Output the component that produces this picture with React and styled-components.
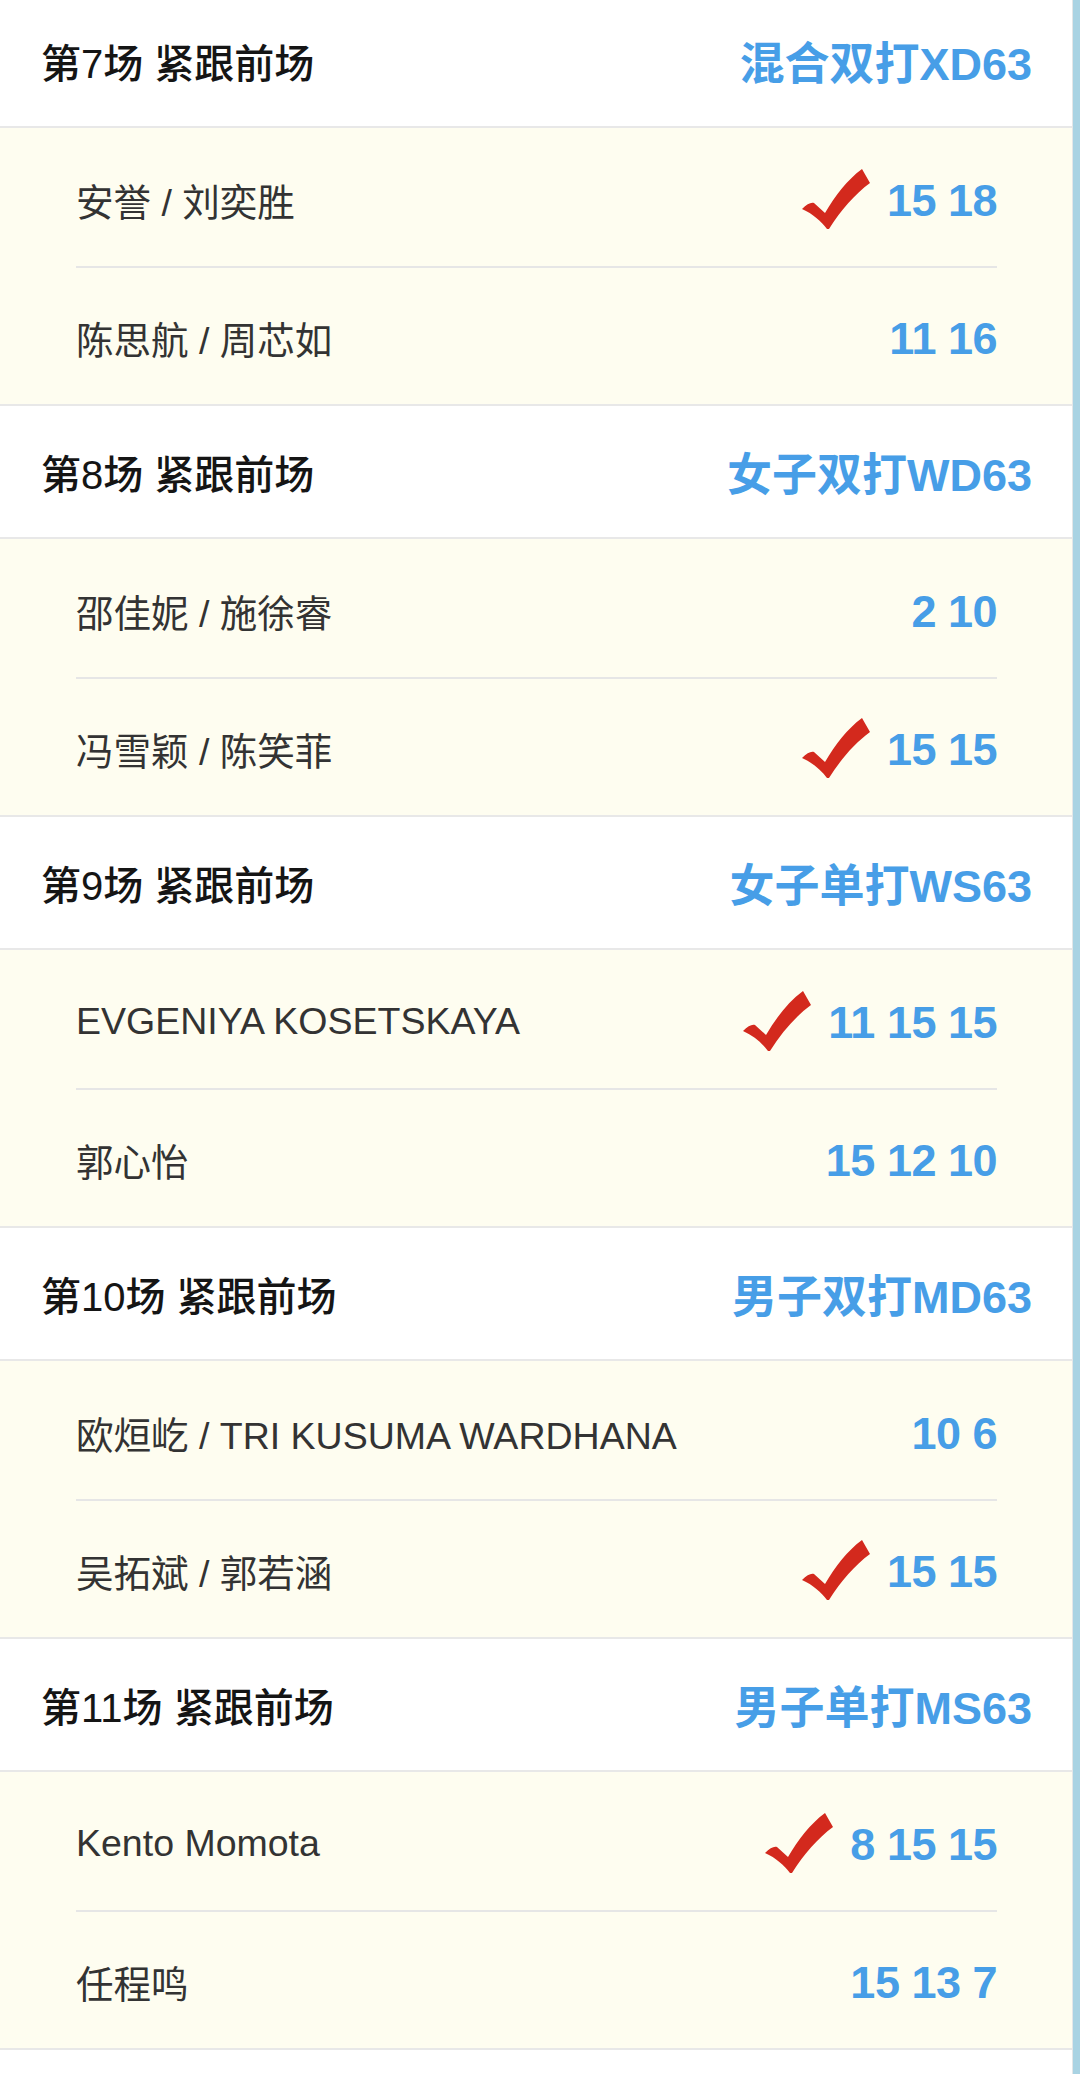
import React from 'react';
import styled, { createGlobalStyle } from 'styled-components';

const matches = [
  {
    no: 7,
    event: '混合双打XD63',
    players: [
      { name: '安誉 / 刘奕胜', scores: [15, 18], win: true },
      { name: '陈思航 / 周芯如', scores: [11, 16] },
    ],
  },
  {
    no: 8,
    event: '女子双打WD63',
    players: [
      { name: '邵佳妮 / 施徐睿', scores: [2, 10] },
      { name: '冯雪颖 / 陈笑菲', scores: [15, 15], win: true },
    ],
  },
  {
    no: 9,
    event: '女子单打WS63',
    players: [
      { name: 'EVGENIYA KOSETSKAYA', scores: [11, 15, 15], win: true },
      { name: '郭心怡', scores: [15, 12, 10] },
    ],
  },
  {
    no: 10,
    event: '男子双打MD63',
    players: [
      { name: '欧烜屹 / TRI KUSUMA WARDHANA', scores: [10, 6] },
      { name: '吴拓斌 / 郭若涵', scores: [15, 15], win: true },
    ],
  },
  {
    no: 11,
    event: '男子单打MS63',
    players: [
      { name: 'Kento Momota', scores: [8, 15, 15], win: true },
      { name: '任程鸣', scores: [15, 13, 7] },
    ],
  },
];

const GlobalStyle = createGlobalStyle`
  html, body {
    margin: 0;
    padding: 0;
    background: #fff;
  }
  body {
    font-family: "Liberation Sans", "Noto Sans CJK SC", sans-serif;
    overflow: hidden;
  }
  * {
    box-sizing: border-box;
  }
`;

function Check() {
  return (
    <CheckMark viewBox="0 0 68 60">
      <path
        d="M0 40 C5 35 9 33 12 34 L23 44 C33 27 45 11 60 0 L68 14 C53 25 39 41 27 60 L25 60 C19 52 11 45 0 40 Z"
        fill="#d3291d"
      />
    </CheckMark>
  );
}

export default function App() {
  return (
    <Page>
      <GlobalStyle />
      <List>
        {matches.map((m) => (
          <Match key={m.no}>
            <MatchHeader>
              <MatchNo>第{m.no}场 紧跟前场</MatchNo>
              <EventName>{m.event}</EventName>
            </MatchHeader>
            <Players>
              {m.players.map((p) => (
                <PlayerRow key={p.name}>
                  <PlayerName>{p.name}</PlayerName>
                  <Result>
                    {p.win && <Check />}
                    <Scores>{p.scores.join(' ')}</Scores>
                  </Result>
                </PlayerRow>
              ))}
            </Players>
          </Match>
        ))}
        <Match />
      </List>
      <SideStrip />
    </Page>
  );
}

const Page = styled.div`
  display: flex;
  min-height: 2074px;
  width: 1080px;
`;

const List = styled.div`
  flex: 1;
  display: flex;
  flex-direction: column;
  margin-top: -5px;
  background: #fff;
  border-right: 1px solid #e3e6e8;
`;

const SideStrip = styled.div`
  width: 7px;
  background: #a9d3e3;
`;

const Match = styled.section`
  display: flex;
  flex-direction: column;
`;

const MatchHeader = styled.div`
  height: 133px;
  display: flex;
  align-items: center;
  justify-content: space-between;
  padding: 0 40px 0 41px;
  background: #fff;
  border-bottom: 2px solid #e8e8e8;
`;

const MatchNo = styled.div`
  font-size: 40px;
  font-weight: 500;
  color: #151515;
`;

const EventName = styled.div`
  font-size: 45px;
  font-weight: 700;
  color: #479ee7;
`;

const Players = styled.div`
  background: #fefdf0;
  border-bottom: 2px solid #e8e8e8;
  padding: 0 75px 0 76px;
`;

const PlayerRow = styled.div`
  height: 138px;
  padding-top: 4px;
  display: flex;
  align-items: center;
  justify-content: space-between;
  & + & {
    padding-top: 2px;
    border-top: 2px solid #e6e6e6;
  }
`;

const PlayerName = styled.div`
  font-size: 37.5px;
  color: #333;
`;

const Result = styled.div`
  display: flex;
  align-items: center;
  gap: 17px;
`;

const CheckMark = styled.svg`
  width: 68px;
  height: 60px;
`;

const Scores = styled.div`
  font-size: 45px;
  font-weight: 700;
  color: #479ee7;
  letter-spacing: -0.5px;
  padding-top: 3px;
`;
